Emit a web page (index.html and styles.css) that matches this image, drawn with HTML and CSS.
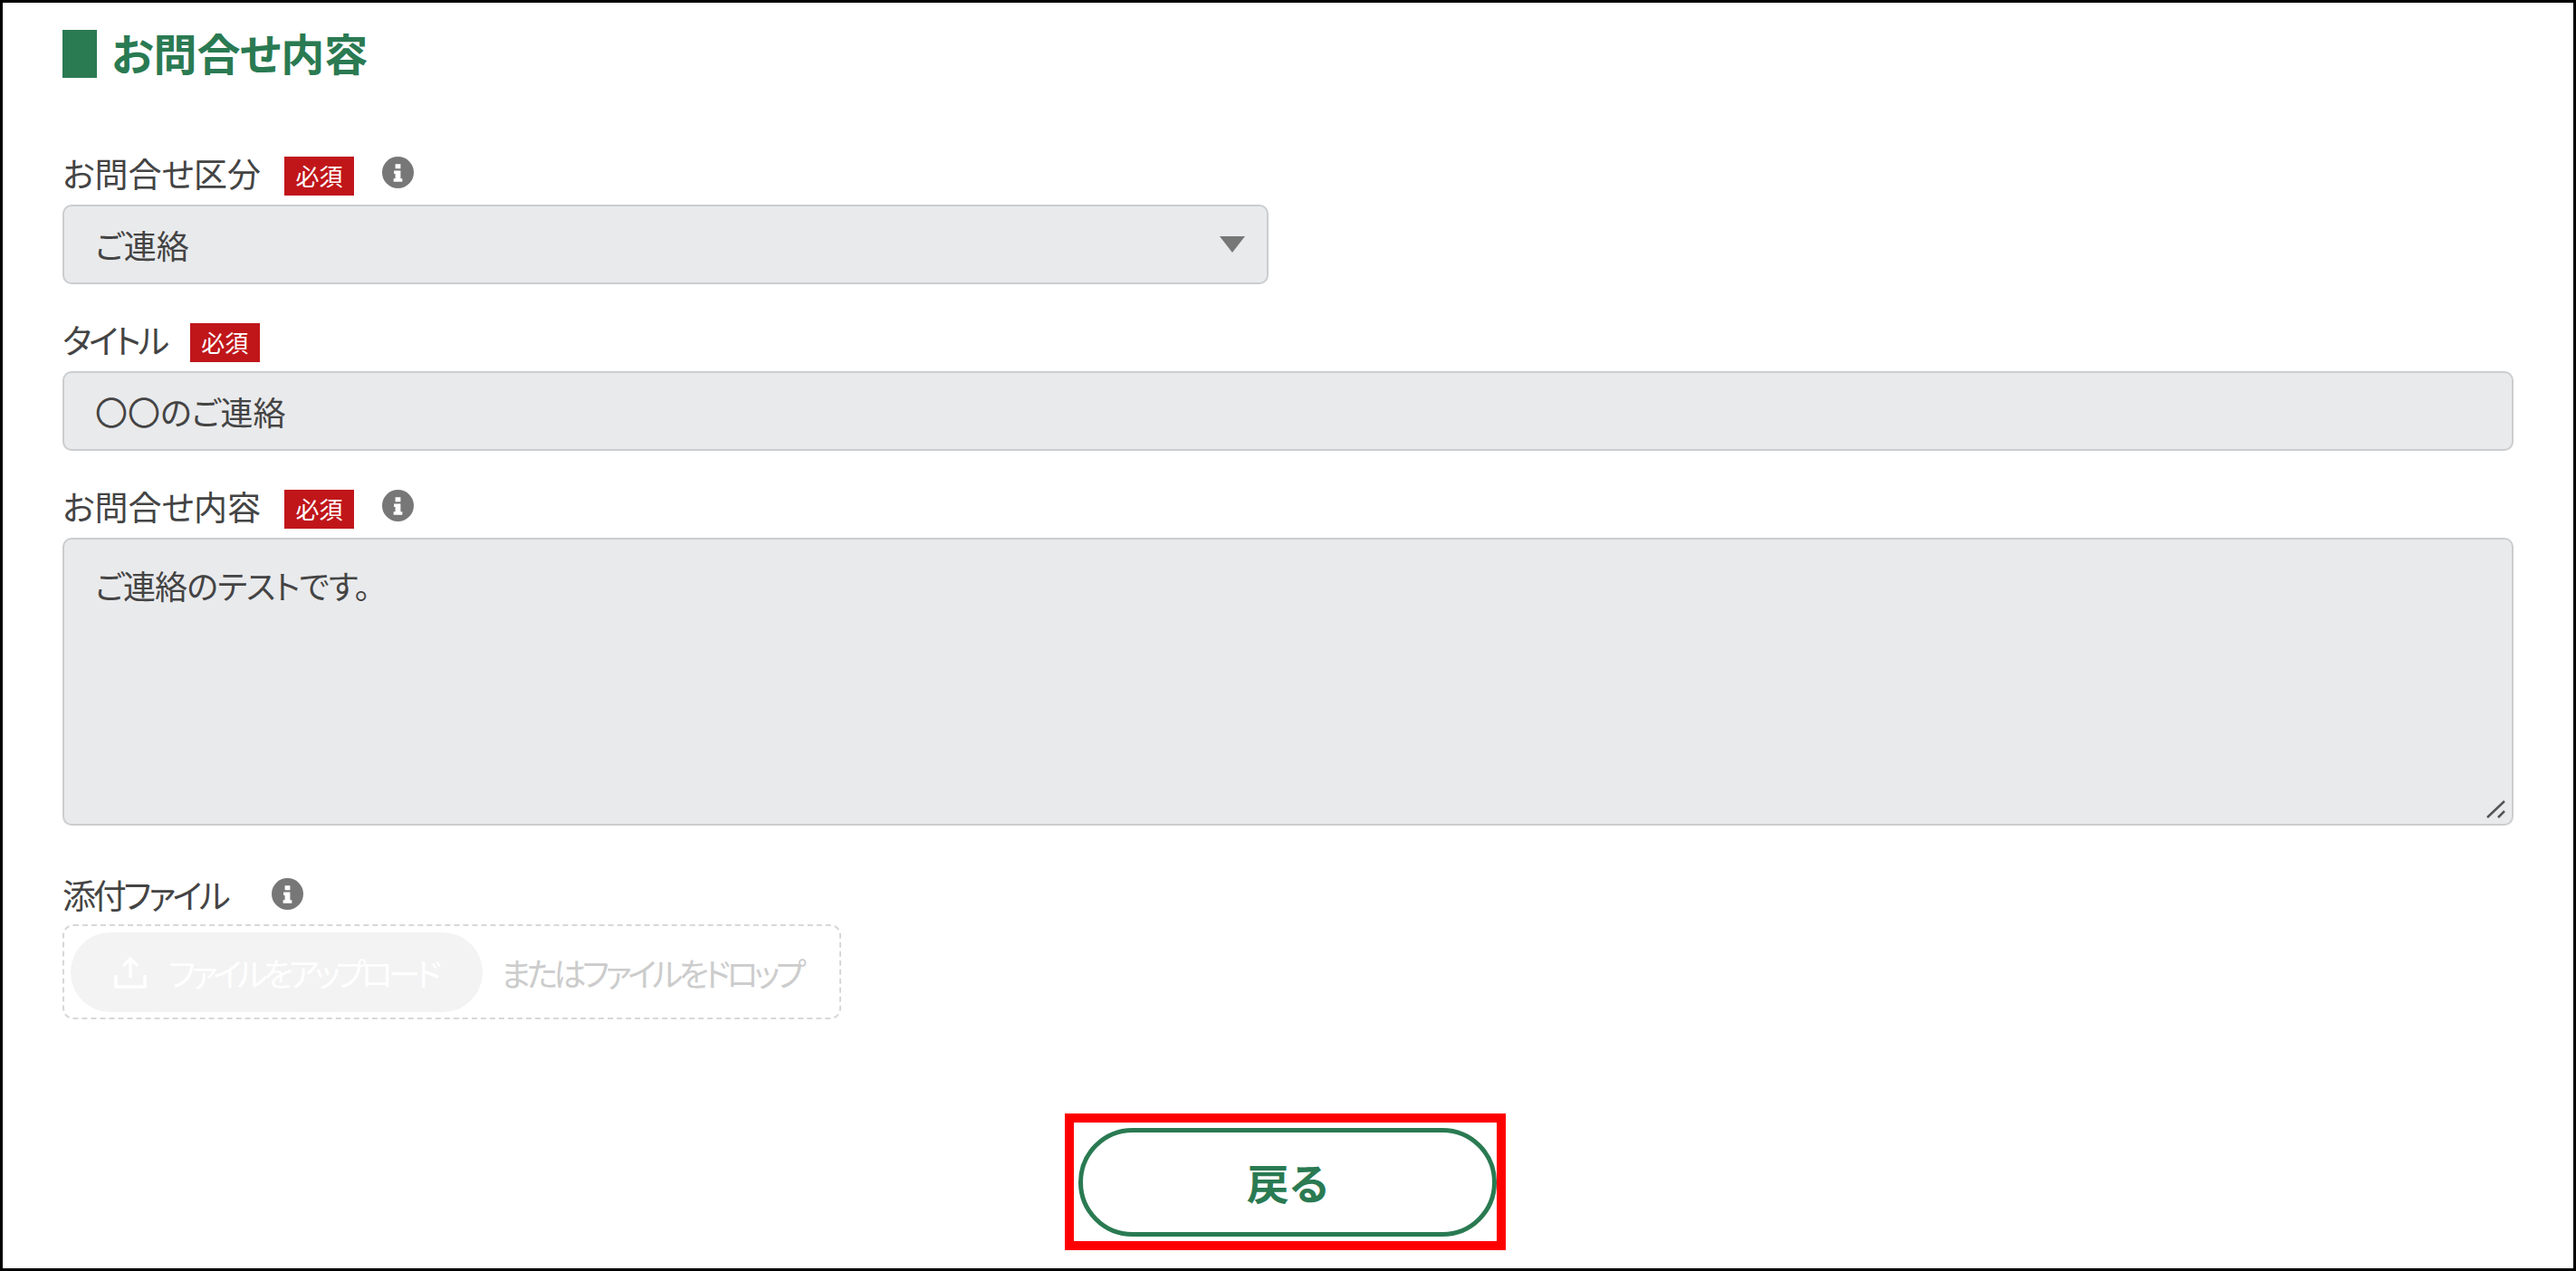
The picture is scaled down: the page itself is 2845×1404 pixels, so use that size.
FILE: index.html
```html
<!DOCTYPE html>
<html lang="ja">
<head>
  <meta charset="UTF-8" />
  <title>お問合せ内容</title>
  <link rel="stylesheet" href="styles.css">
</head>
<body>
  <div class="page">
    <h2 class="section-title">お問合せ内容</h2>

    <div class="field field-first">
      <div class="field-label">
        <span class="label-text">お問合せ区分</span>
        <span class="badge-required">必須</span>
        <svg class="info-icon" viewBox="0 0 36 36"><circle cx="18" cy="18" r="18" fill="#777"/><path d="M15 8.500h6v5h-6zM13.500 16h7.500v9h2v3.500h-10V25h2v-5.500h-1.500z" fill="#fff"/></svg>
      </div>
      <div class="control control-select">
        <span>ご連絡</span>
        <span class="select-arrow"></span>
      </div>
    </div>

    <div class="field">
      <div class="field-label">
        <span class="label-text label-narrow">タイトル</span>
        <span class="badge-required">必須</span>
      </div>
      <div class="control">〇〇のご連絡</div>
    </div>

    <div class="field">
      <div class="field-label">
        <span class="label-text">お問合せ内容</span>
        <span class="badge-required">必須</span>
        <svg class="info-icon" viewBox="0 0 36 36"><circle cx="18" cy="18" r="18" fill="#777"/><path d="M15 8.500h6v5h-6zM13.500 16h7.500v9h2v3.500h-10V25h2v-5.500h-1.500z" fill="#fff"/></svg>
      </div>
      <div class="control control-textarea">
        ご連絡のテストです。
        <svg class="resize-grip" viewBox="0 0 24 22"><path d="M2 20L21 2M14 20l7-7" stroke="#555" stroke-width="2.500" fill="none"/></svg>
      </div>
    </div>

    <div class="field field-upload">
      <div class="field-label">
        <span class="label-text label-narrow">添付ファイル</span>
        <svg class="info-icon info-icon-upload" viewBox="0 0 36 36"><circle cx="18" cy="18" r="18" fill="#777"/><path d="M15 8.500h6v5h-6zM13.500 16h7.500v9h2v3.500h-10V25h2v-5.500h-1.500z" fill="#fff"/></svg>
      </div>
      <div class="dropzone">
        <div class="upload-button">
          <svg class="upload-icon" viewBox="0 0 36 36"><path d="M18 24V4M10 11l8-8 8 8M2 21v13h32V21" stroke="#fff" stroke-width="3.500" fill="none"/></svg>
          <span>ファイルをアップロード</span>
        </div>
        <span class="drop-text">またはファイルをドロップ</span>
      </div>
    </div>

    <div class="actions">
      <div class="highlight-box">
        <button class="back-button">戻る</button>
      </div>
    </div>
  </div>
</body>
</html>
```

FILE: styles.css
```css
* {
  margin: 0;
  padding: 0;
  box-sizing: border-box;
}

body {
  font-family: "Noto Sans CJK JP", "Noto Sans", sans-serif;
  font-feature-settings: "palt";
  background-color: #ffffff;
  color: #444444;
}

.page {
  width: 2845px;
  height: 1404px;
  border: 3px solid #000000;
  padding: 30px 66px 0;
  overflow: hidden;
}

.section-title {
  display: flex;
  align-items: flex-start;
  gap: 16px;
  height: 54px;
  line-height: 48px;
  font-size: 48px;
  font-weight: 700;
  color: #2a7a52;
}

.section-title::before {
  content: "";
  width: 38px;
  height: 53px;
  background-color: #2a7a52;
}

.field {
  margin-top: 43px;
}

.field-first {
  margin-top: 86px;
}

.field-upload {
  margin-top: 58px;
}

.field-label {
  display: flex;
  align-items: flex-start;
  height: 43px;
  margin-bottom: 10px;
}

.label-text {
  font-size: 37px;
  line-height: 37px;
  margin-right: 26px;
}

.label-narrow {
  letter-spacing: -3.300px;
}

.badge-required {
  width: 77px;
  height: 43px;
  line-height: 41px;
  text-align: center;
  font-size: 26px;
  color: #ffffff;
  background-color: #c0161a;
}

.info-icon {
  width: 35px;
  height: 35px;
  margin-left: 31px;
}

.info-icon-upload {
  margin-left: 23px;
}

.control {
  height: 88px;
  display: flex;
  align-items: center;
  justify-content: space-between;
  padding: 0 34px;
  font-size: 36px;
  background-color: #e9eaec;
  border: 2px solid #cbcdcf;
  border-radius: 10px;
}

.control-select {
  width: 1332px;
  padding-right: 24px;
}

.select-arrow {
  width: 0;
  height: 0;
  border-left: 14px solid transparent;
  border-right: 14px solid transparent;
  border-top: 18px solid #777777;
}

.control-textarea {
  position: relative;
  height: 318px;
  align-items: flex-start;
  padding-top: 24px;
  letter-spacing: -0.800px;
}

.resize-grip {
  position: absolute;
  right: 5px;
  bottom: 5px;
  width: 24px;
  height: 22px;
}

.dropzone {
  display: flex;
  align-items: center;
  gap: 20px;
  width: 860px;
  height: 105px;
  margin-top: -2px;
  padding: 0 7px;
  border: 2px dashed #d8d8d8;
  border-radius: 12px;
  white-space: nowrap;
}

.upload-button {
  display: flex;
  align-items: center;
  gap: 24px;
  flex-shrink: 0;
  width: 455px;
  height: 88px;
  padding-left: 48px;
  font-size: 36px;
  letter-spacing: -5px;
  color: #ffffff;
  background-color: #f3f3f3;
  border-radius: 44px;
}

.upload-icon {
  width: 36px;
  height: 36px;
  flex-shrink: 0;
}

.drop-text {
  font-size: 36px;
  letter-spacing: -4.500px;
  color: #cccccc;
}

.actions {
  display: flex;
  justify-content: center;
  padding-right: 6px;
  margin-top: 104px;
}

.highlight-box {
  width: 487px;
  height: 151px;
  padding: 6px 0 0 5px;
  border: 10px solid #ff0000;
  overflow: hidden;
}

.back-button {
  display: block;
  width: 462px;
  height: 120px;
  padding-bottom: 4px;
  font-family: inherit;
  font-feature-settings: inherit;
  font-size: 47px;
  font-weight: 700;
  color: #2a7a52;
  background-color: #ffffff;
  border: 5px solid #2a7a52;
  border-radius: 60px;
}
```
